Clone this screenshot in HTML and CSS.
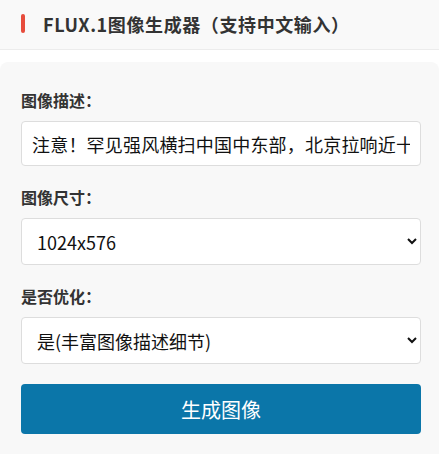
FILE: index.html
```html
<!DOCTYPE html>
<html lang="zh-CN">
<head>
<meta charset="utf-8">
<title>FLUX.1图像生成器</title>
<link rel="stylesheet" href="styles.css">
</head>
<body>
<header class="topbar">
  <span class="accent"></span>
  <h1 class="title">FLUX.1图像生成器（支持中文输入）</h1>
</header>
<main class="card">
  <div class="group">
    <label class="label" for="prompt">图像描述：</label>
    <input class="field" id="prompt" type="text" value="注意！罕见强风横扫中国中东部，北京拉响近十年来首个大风橙色预警">
  </div>
  <div class="group">
    <label class="label" for="size">图像尺寸：</label>
    <select class="field select" id="size">
      <option>1024x576</option>
      <option>1024x1024</option>
    </select>
  </div>
  <div class="group">
    <label class="label" for="opt">是否优化：</label>
    <select class="field select" id="opt">
      <option>是(丰富图像描述细节)</option>
      <option>否</option>
    </select>
  </div>
  <button class="btn" type="button">生成图像</button>
</main>
</body>
</html>
```
FILE: styles.css
```css
html, body {
  margin: 0;
  padding: 0;
  background: #ffffff;
  font-family: "Noto Sans CJK SC", "Noto Sans", sans-serif;
  color: #333333;
}

.topbar {
  height: 50px;
  box-sizing: border-box;
  border-bottom: 1px solid #ececec;
  background: #f9f9f9;
  display: flex;
  align-items: center;
  padding-left: 21px;
}

.accent {
  width: 4px;
  height: 19px;
  border-radius: 2px;
  background: #e74c3c;
  margin-right: 18px;
  margin-top: -2px;
}

.title {
  margin: 0;
  font-size: 18px;
  font-weight: 700;
  color: #333333;
  line-height: 24px;
  letter-spacing: 0.6px;
  margin-top: -1px;
}

.card {
  margin-top: 12px;
  background: #f8f8f8;
  border-radius: 8px 8px 0 0;
  padding: 26px 18px 20px 21px;
  min-height: 372px;
  box-sizing: border-box;
}

.group {
  margin-bottom: 19px;
  display: flex;
  flex-direction: column;
}

.label {
  font-size: 16px;
  font-weight: 700;
  line-height: 24px;
  margin-bottom: 9px;
  color: #333333;
}

.field {
  box-sizing: border-box;
  width: 100%;
  height: 45px;
  border: 1px solid #dddddd;
  border-radius: 4px;
  background: #ffffff;
  font-family: "Noto Sans CJK SC", "Noto Sans", sans-serif;
  font-size: 18px;
  color: #111111;
  padding: 0 10px;
  margin: 0;
  outline: none;
  letter-spacing: 0.2px;
}

.select {
  height: 47px;
  padding-left: 11px;
  letter-spacing: 0;
}

.btn {
  display: block;
  width: 100%;
  height: 50px;
  margin-top: 20px;
  border: none;
  border-radius: 4px;
  background: #0b76a9;
  color: #ffffff;
  font-family: "Noto Sans CJK SC", "Noto Sans", sans-serif;
  font-size: 20px;
}
```
